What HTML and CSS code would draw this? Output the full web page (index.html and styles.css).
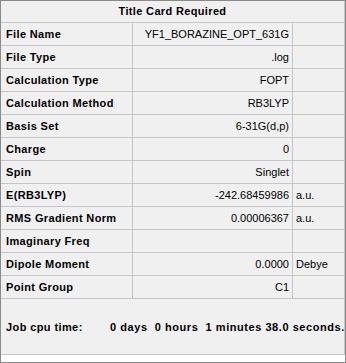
FILE: index.html
```html
<!DOCTYPE html>
<html>
<head>
<meta charset="utf-8">
<link rel="stylesheet" href="styles.css">
</head>
<body>
<div class="panel">
  <div class="grid">
    <div class="head">Title Card Required</div>

    <div class="lbl">File Name</div><div class="val">YF1_BORAZINE_OPT_631G</div><div class="unit"></div>
    <div class="lbl">File Type</div><div class="val">.log</div><div class="unit"></div>
    <div class="lbl">Calculation Type</div><div class="val">FOPT</div><div class="unit"></div>
    <div class="lbl">Calculation Method</div><div class="val">RB3LYP</div><div class="unit"></div>
    <div class="lbl">Basis Set</div><div class="val">6-31G(d,p)</div><div class="unit"></div>
    <div class="lbl">Charge</div><div class="val">0</div><div class="unit"></div>
    <div class="lbl">Spin</div><div class="val">Singlet</div><div class="unit"></div>
    <div class="lbl">E(RB3LYP)</div><div class="val">-242.68459986</div><div class="unit">a.u.</div>
    <div class="lbl">RMS Gradient Norm</div><div class="val">0.00006367</div><div class="unit">a.u.</div>
    <div class="lbl">Imaginary Freq</div><div class="val"></div><div class="unit"></div>
    <div class="lbl">Dipole Moment</div><div class="val">0.0000</div><div class="unit">Debye</div>
    <div class="lbl">Point Group</div><div class="val">C1</div><div class="unit"></div>

    <div class="job">
      <span class="job-lbl">Job cpu time:</span>
      <span class="job-val">0 days  0 hours  1 minutes 38.0 seconds.</span>
    </div>
  </div>
</div>
</body>
</html>
```

FILE: styles.css
```css
html, body {
  margin: 0;
  padding: 0;
  background: #ffffff;
}

.panel {
  width: 346px;
  height: 363px;
  box-sizing: border-box;
  border: 1px solid #8a8a8a;
  background: #ffffff;
  font-family: "Liberation Sans", Arial, sans-serif;
  font-size: 11px;
  color: #000000;
}

.grid {
  display: grid;
  grid-template-columns: 132px 160px 52px;
  grid-template-rows: 22px repeat(12, 23px) 56px;
  background: #f0f0f0;
}

.grid > div {
  box-sizing: border-box;
  border-right: 1px solid #c6c6c6;
  border-bottom: 1px solid #c6c6c6;
  line-height: 22px;
  white-space: nowrap;
  overflow: hidden;
}

.grid > .head {
  grid-column: 1 / 4;
  line-height: 21px;
  text-align: center;
  font-weight: bold;
  letter-spacing: 0.35px;
}

.lbl {
  padding-left: 5px;
  font-weight: bold;
  letter-spacing: 0.35px;
}

.val {
  text-align: right;
  padding-right: 3px;
}

.unit {
  padding-left: 3px;
}

.grid > .job {
  grid-column: 1 / 4;
  display: flex;
  align-items: center;
  padding-left: 5px;
  font-weight: bold;
  letter-spacing: 0.4px;
  line-height: 14px;
}

.job-lbl {
  width: 104px;
  flex: none;
}

.job-val {
  white-space: pre;
  letter-spacing: 0.55px;
}
```
